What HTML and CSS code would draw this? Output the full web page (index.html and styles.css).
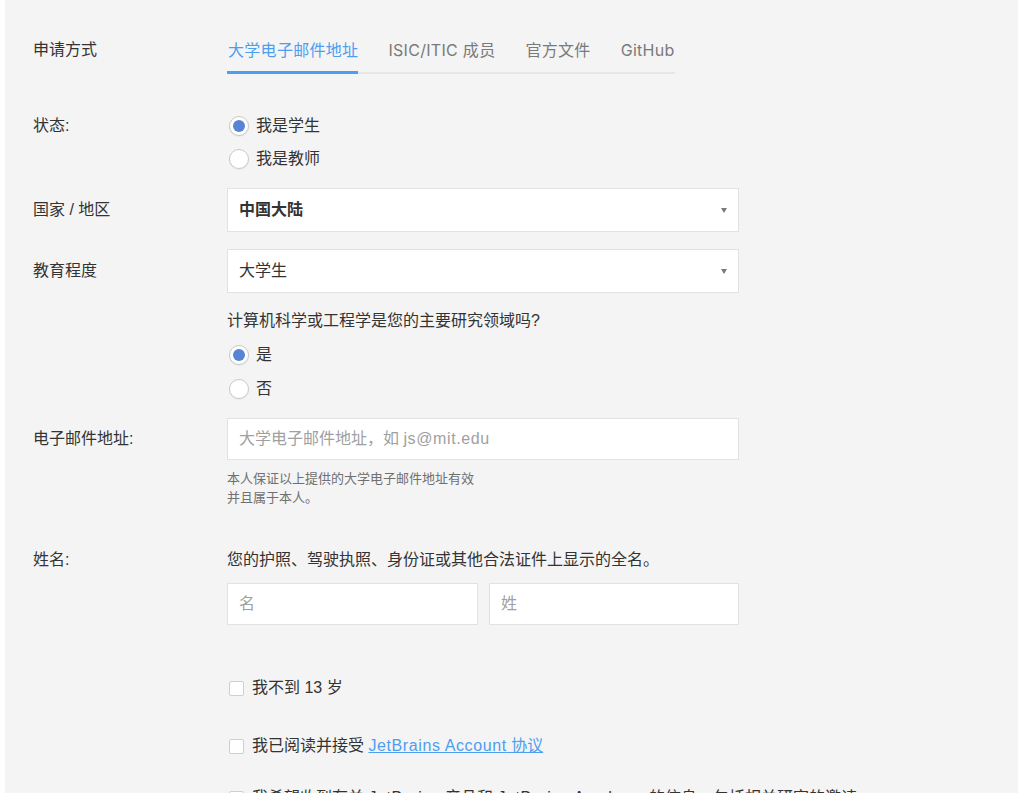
FILE: index.html
```
<!DOCTYPE html>
<html lang="zh-CN">
<head>
<meta charset="utf-8">
<title>申请表</title>
<link rel="stylesheet" href="styles.css">
</head>
<body>
<div class="panel">
  <div class="row row-tabs">
    <div class="label">申请方式</div>
    <div class="field">
      <div class="tabs">
        <span class="tab active">大学电子邮件地址</span>
        <span class="tab">ISIC/ITIC 成员</span>
        <span class="tab">官方文件</span>
        <span class="tab">GitHub</span>
      </div>
    </div>
  </div>

  <div class="row row-status">
    <div class="label label-radio">状态:</div>
    <div class="field">
      <div class="radio-item"><span class="radio checked"></span><span>我是学生</span></div>
      <div class="radio-item"><span class="radio"></span><span>我是教师</span></div>
    </div>
  </div>

  <div class="row row-country">
    <div class="label label-box">国家 / 地区</div>
    <div class="field">
      <div class="select"><span class="select-value bold">中国大陆</span><span class="caret"></span></div>
    </div>
  </div>

  <div class="row row-edu">
    <div class="label label-box">教育程度</div>
    <div class="field">
      <div class="select"><span class="select-value">大学生</span><span class="caret"></span></div>
      <div class="question">计算机科学或工程学是您的主要研究领域吗?</div>
      <div class="radio-group">
        <div class="radio-item tall"><span class="radio checked"></span><span>是</span></div>
        <div class="radio-item tall"><span class="radio"></span><span>否</span></div>
      </div>
    </div>
  </div>

  <div class="row row-email">
    <div class="label label-input">电子邮件地址:</div>
    <div class="field">
      <div class="input"><span class="placeholder">大学电子邮件地址，如 <span class="latin">js@mit.edu</span></span></div>
      <div class="hint">本人保证以上提供的大学电子邮件地址有效<br>并且属于本人。</div>
    </div>
  </div>

  <div class="row row-name">
    <div class="label">姓名:</div>
    <div class="field">
      <div class="desc">您的护照、驾驶执照、身份证或其他合法证件上显示的全名。</div>
      <div class="name-grid">
        <div class="input"><span class="placeholder">名</span></div>
        <div class="input"><span class="placeholder">姓</span></div>
      </div>
    </div>
  </div>

  <div class="row row-check1">
    <div class="label"></div>
    <div class="field">
      <div class="check-item"><span class="checkbox"></span><span>我不到 13 岁</span></div>
    </div>
  </div>

  <div class="row row-check2">
    <div class="label"></div>
    <div class="field">
      <div class="check-item"><span class="checkbox"></span><span>我已阅读并接受 <a class="link" href="#"><span class="latin">JetBrains Account</span> 协议</a></span></div>
    </div>
  </div>

  <div class="row row-check3">
    <div class="label"></div>
    <div class="field field-wide">
      <div class="check-item"><span class="checkbox"></span><span>我希望收到有关 <span class="latin">JetBrains</span> 产品和 <span class="latin">JetBrains Academy</span> 的信息，包括相关研究的邀请</span>
        <svg class="info" width="11" height="11" viewBox="0 0 11 11"><circle cx="5.5" cy="5.5" r="5.5" fill="#b5b5b5"/><rect x="4.8" y="4.6" width="1.4" height="4" fill="#fff"/><rect x="4.8" y="2.4" width="1.4" height="1.4" fill="#fff"/></svg>
      </div>
    </div>
  </div>
</div>
</body>
</html>
```

FILE: styles.css
```
html, body {
  margin: 0;
  padding: 0;
  background: #ffffff;
}

body {
  font-family: "Liberation Sans", "Noto Sans CJK SC", sans-serif;
  font-size: 16px;
  color: #333333;
}

.panel {
  margin: 0 6px 0 5px;
  background: #f4f4f4;
  padding: 38px 0 120px 28px;
  min-height: 900px;
}

.row {
  display: flex;
  align-items: flex-start;
}

.label {
  width: 194px;
  flex: none;
  line-height: 24px;
  color: #333333;
}

.label-radio { padding-top: 5px; }
.label-box { padding-top: 10px; }
.label-input { padding-top: 9px; }

.field {
  width: 512px;
  flex: none;
}

.field-wide {
  width: 760px;
}

.latin {
  letter-spacing: 0.6px;
}

/* Tabs */
.tabs {
  display: inline-flex;
  border-bottom: 2px solid #e6e6e6;
  font-family: "Inter", "Noto Sans CJK SC", sans-serif;
  letter-spacing: 0.3px;
}

.tab {
  line-height: 24px;
  padding-bottom: 9px;
  margin-right: 29px;
  color: #7a7a7a;
  padding-left: 1px;
}

.tab:last-child { margin-right: 0; }

.tab.active {
  color: #4d9ef0;
  border-bottom: 3px solid #4d9ef0;
  margin-bottom: -2px;
}

/* Radios */
.row-status { margin-top: 35px; }

.radio-item {
  display: flex;
  align-items: center;
  height: 33px;
  gap: 7px;
  line-height: 24px;
}

.radio-item.tall { height: 34px; }

.radio {
  box-sizing: border-box;
  width: 20px;
  height: 20px;
  margin-left: 2px;
  border-radius: 50%;
  border: 1px solid #c9c9c9;
  background: #ffffff;
  position: relative;
  box-shadow: 0 1px 1px rgba(0,0,0,0.05);
}

.radio.checked::after {
  content: "";
  position: absolute;
  left: 3px;
  top: 3px;
  width: 12px;
  height: 12px;
  border-radius: 50%;
  background: #5884d4;
}

/* Selects */
.row-country { margin-top: 13px; }
.row-edu { margin-top: 17px; }

.select {
  box-sizing: border-box;
  height: 44px;
  background: #ffffff;
  border: 1px solid #e2e2e2;
  display: flex;
  align-items: center;
  justify-content: space-between;
  padding: 0 11px 0 11px;
}

.select-value { line-height: 24px; color: #333333; }
.bold { font-weight: bold; }

.caret {
  width: 0;
  height: 0;
  border-left: 3.5px solid transparent;
  border-right: 3.5px solid transparent;
  border-top: 5px solid #7a7a7a;
}

.question {
  margin-top: 16px;
  line-height: 24px;
}

.radio-group { margin-top: 5px; }

/* Inputs */
.row-email { margin-top: 12px; }

.input {
  box-sizing: border-box;
  height: 42px;
  background: #ffffff;
  border: 1px solid #e2e2e2;
  display: flex;
  align-items: center;
  padding: 0 11px;
}

.placeholder { color: #a0a0a0; line-height: 24px; }

.hint {
  margin-top: 9px;
  font-size: 13px;
  line-height: 19px;
  color: #707070;
}

.row-name { margin-top: 41px; }

.desc { line-height: 24px; }

.name-grid {
  margin-top: 11px;
  display: grid;
  grid-template-columns: 251px 1fr;
  gap: 11px;
}

/* Checkboxes */
.row-check1 { margin-top: 51px; }
.row-check2 { margin-top: 34px; }
.row-check3 { margin-top: 28px; }

.check-item {
  display: flex;
  align-items: center;
  line-height: 24px;
  gap: 8px;
  white-space: nowrap;
}

.checkbox {
  box-sizing: border-box;
  width: 15px;
  height: 15px;
  margin-left: 2px;
  background: #ffffff;
  border: 1px solid #cfcfcf;
  border-radius: 2px;
}

.link {
  color: #4d9ef0;
  text-decoration: underline;
}

.info {
  margin-left: -2px;
}
```
